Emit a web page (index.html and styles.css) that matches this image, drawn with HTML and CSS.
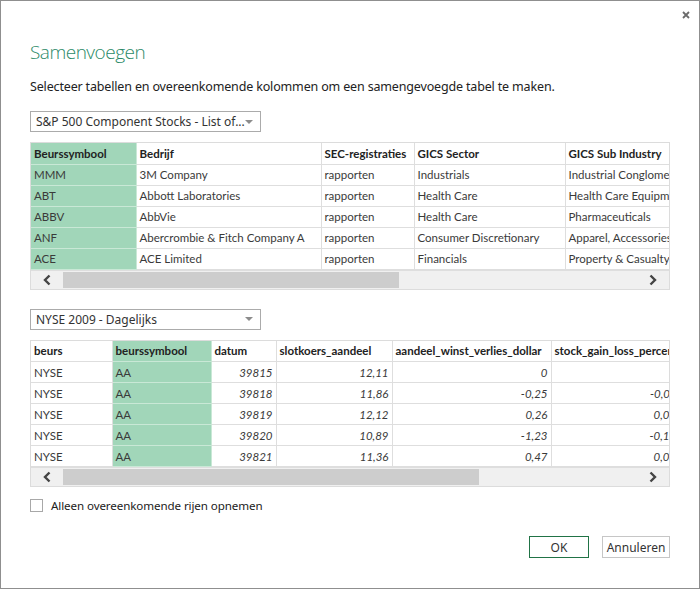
FILE: index.html
```html
<!DOCTYPE html>
<html>
<head>
<meta charset="utf-8">
<link rel="stylesheet" href="styles.css">
</head>
<body>
<div class="dialog">
  <button class="close" aria-label="Sluiten">
    <svg width="8" height="8" viewBox="0 0 8 8"><path d="M1 1L7 7M7 1L1 7" stroke="#6b6b6b" stroke-width="1.8"/></svg>
  </button>
  <h1 class="title">Samenvoegen</h1>
  <p class="subtitle">Selecteer tabellen en overeenkomende kolommen om een samengevoegde tabel te maken.</p>

  <div class="select">
    <span class="sel-text">S&amp;P 500 Component Stocks - List of...</span>
    <svg class="caret" width="8" height="5" viewBox="0 0 8 5"><path d="M0 0H8L4 4Z" fill="#8c8c8c"/></svg>
  </div>

  <div class="grid grid1">
    <table class="t1">
      <colgroup><col class="w105"><col class="w185"><col class="w93"><col class="w151"><col class="w130"></colgroup>
      <thead><tr><th class="key">Beurssymbool</th><th>Bedrijf</th><th>SEC-registraties</th><th>GICS Sector</th><th>GICS Sub Industry</th></tr></thead>
      <tbody>
        <tr><td class="key">MMM</td><td>3M Company</td><td>rapporten</td><td>Industrials</td><td>Industrial Conglomerates</td></tr>
        <tr><td class="key">ABT</td><td>Abbott Laboratories</td><td>rapporten</td><td>Health Care</td><td>Health Care Equipment</td></tr>
        <tr><td class="key">ABBV</td><td>AbbVie</td><td>rapporten</td><td>Health Care</td><td>Pharmaceuticals</td></tr>
        <tr><td class="key">ANF</td><td>Abercrombie &amp; Fitch Company A</td><td>rapporten</td><td>Consumer Discretionary</td><td>Apparel, Accessories</td></tr>
        <tr><td class="key">ACE</td><td>ACE Limited</td><td>rapporten</td><td>Financials</td><td>Property &amp; Casualty</td></tr>
      </tbody>
    </table>
    <div class="scroll">
      <span class="arrow"><svg width="10" height="12" viewBox="0 0 10 12"><path d="M7.5 1.5L3 6L7.5 10.5" fill="none" stroke="#444" stroke-width="2.4"/></svg></span>
      <div class="track"><div class="thumb thumb1"></div></div>
      <span class="arrow"><svg width="10" height="12" viewBox="0 0 10 12"><path d="M2.5 1.5L7 6L2.5 10.5" fill="none" stroke="#444" stroke-width="2.4"/></svg></span>
    </div>
  </div>

  <div class="select select2">
    <span class="sel-text">NYSE 2009 - Dagelijks</span>
    <svg class="caret" width="8" height="5" viewBox="0 0 8 5"><path d="M0 0H8L4 4Z" fill="#8c8c8c"/></svg>
  </div>

  <div class="grid grid2">
    <table class="t2">
      <colgroup><col class="w81"><col class="w99"><col class="w65"><col class="w116"><col class="w159"><col class="w142"></colgroup>
      <thead><tr><th>beurs</th><th class="key">beurssymbool</th><th>datum</th><th>slotkoers_aandeel</th><th>aandeel_winst_verlies_dollar</th><th>stock_gain_loss_percent</th></tr></thead>
      <tbody>
        <tr><td>NYSE</td><td class="key">AA</td><td class="num">39815</td><td class="num">12,11</td><td class="num">0</td><td class="num">0</td></tr>
        <tr><td>NYSE</td><td class="key">AA</td><td class="num">39818</td><td class="num">11,86</td><td class="num">-0,25</td><td class="num">-0,0206</td></tr>
        <tr><td>NYSE</td><td class="key">AA</td><td class="num">39819</td><td class="num">12,12</td><td class="num">0,26</td><td class="num">0,0219</td></tr>
        <tr><td>NYSE</td><td class="key">AA</td><td class="num">39820</td><td class="num">10,89</td><td class="num">-1,23</td><td class="num">-0,1015</td></tr>
        <tr><td>NYSE</td><td class="key">AA</td><td class="num">39821</td><td class="num">11,36</td><td class="num">0,47</td><td class="num">0,0413</td></tr>
      </tbody>
    </table>
    <div class="scroll">
      <span class="arrow"><svg width="10" height="12" viewBox="0 0 10 12"><path d="M7.5 1.5L3 6L7.5 10.5" fill="none" stroke="#444" stroke-width="2.4"/></svg></span>
      <div class="track"><div class="thumb thumb2"></div></div>
      <span class="arrow"><svg width="10" height="12" viewBox="0 0 10 12"><path d="M2.5 1.5L7 6L2.5 10.5" fill="none" stroke="#444" stroke-width="2.4"/></svg></span>
    </div>
  </div>

  <label class="check">
    <span class="box"></span>
    <span>Alleen overeenkomende rijen opnemen</span>
  </label>

  <div class="buttons">
    <button class="btn ok">OK</button>
    <button class="btn cancel">Annuleren</button>
  </div>
</div>
</body>
</html>
```

FILE: styles.css
```css
html, body {
  margin: 0;
  padding: 0;
  background: #fff;
}
.dialog {
  position: relative;
  box-sizing: border-box;
  width: 700px;
  height: 589px;
  border: 1px solid #8f8f8f;
  padding: 37px 29px 0 29px;
  font-family: "Noto Sans", "Open Sans", sans-serif;
  font-size: 12.5px;
  color: #222;
  display: flex;
  flex-direction: column;
}
.close {
  position: absolute;
  top: 8px;
  right: 7px;
  width: 12px;
  height: 12px;
  padding: 0;
  border: 0;
  background: none;
  display: flex;
  align-items: center;
  justify-content: center;
}
.title {
  margin: 0;
  font-family: "Open Sans", sans-serif;
  font-weight: 300;
  font-size: 19px;
  line-height: 28px;
  color: #2b8a68;
  letter-spacing: -0.5px;
}
.subtitle {
  margin: 12px 0 0 0;
  line-height: 18px;
  font-size: 12.5px;
  letter-spacing: -0.16px;
  white-space: nowrap;
}
.select {
  margin-top: 15px;
  box-sizing: border-box;
  width: 231px;
  height: 21px;
  border: 1px solid #ababab;
  display: flex;
  align-items: center;
  justify-content: space-between;
  padding: 0 7px 0 5px;
  font-size: 12px;
  color: #333;
  white-space: nowrap;
}
.sel-text {
  overflow: hidden;
}
.select2 {
  margin-top: 19px;
}
.caret {
  margin-top: 1px;
  flex: none;
}
.grid {
  margin-top: 10px;
  box-sizing: border-box;
  width: 640px;
  border: 1px solid #dcdcdc;
  overflow: hidden;
}
.grid2 {
  margin-top: 10px;
}
table {
  border-collapse: collapse;
  table-layout: fixed;
  font-family: Lato, "Liberation Sans", sans-serif;
  font-size: 11.5px;
  color: #3a3a3a;
}
.t1 { width: 664px; }
.t2 { width: 662px; }
.w105 { width: 105px; }
.w185 { width: 185px; }
.w93 { width: 93px; }
.w151 { width: 151px; }
.w130 { width: 130px; }
.w81 { width: 81px; }
.w99 { width: 99px; }
.w65 { width: 65px; }
.w116 { width: 116px; }
.w159 { width: 159px; }
.w142 { width: 142px; }
tr {
  height: 21px;
}
th, td {
  padding: 0 3px;
  border: 1px solid #dedede;
  white-space: nowrap;
  overflow: hidden;
  text-overflow: clip;
  text-align: left;
}
th {
  font-weight: 700;
  color: #222;
  background: #fff;
}
thead th { border-top: 0; }
th:first-child, td:first-child { border-left: 0; }
.key {
  background: #a1d6b9;
  border-color: #c9e8d6;
}
.num {
  text-align: right;
  font-style: italic;
}
.scroll {
  height: 18px;
  background: #f0f0f0;
  border-top: 1px solid #dedede;
  display: flex;
  align-items: center;
}
.arrow {
  width: 32px;
  height: 18px;
  display: flex;
  align-items: center;
  justify-content: center;
}
.track {
  flex: 1;
  height: 16px;
  display: flex;
}
.thumb {
  height: 16px;
  background: #cdcdcd;
}
.thumb1 { width: 336px; }
.thumb2 { width: 416px; }
.check {
  margin-top: 11px;
  display: flex;
  align-items: center;
  gap: 8px;
  font-size: 11.6px;
  letter-spacing: -0.1px;
}
.box {
  box-sizing: border-box;
  width: 13px;
  height: 13px;
  border: 1px solid #a8a8a8;
  background: #fff;
}
.buttons {
  margin-top: 23px;
  display: flex;
  justify-content: flex-end;
  gap: 13px;
  width: 640px;
}
.btn {
  box-sizing: border-box;
  height: 22px;
  padding: 0;
  border: 1px solid #c6c6c6;
  background: #fff;
  font-family: "Noto Sans", "Open Sans", sans-serif;
  font-size: 12px;
  color: #333;
}
.ok {
  width: 60px;
  border: 1px solid #217346;
}
.cancel {
  width: 68px;
}
```
